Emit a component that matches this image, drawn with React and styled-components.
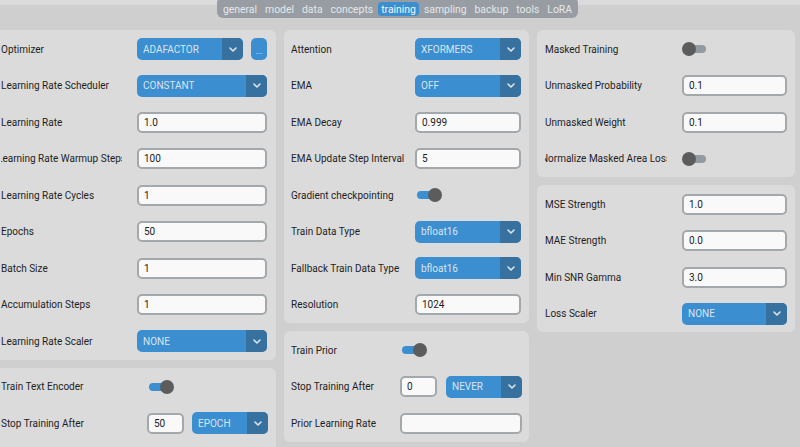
import React from 'react'
import styled, { createGlobalStyle } from 'styled-components'

const GlobalStyle = createGlobalStyle`
	html, body {
		margin: 0;
		padding: 0;
	}
	body {
		background: #cfcfcf;
		font-family: Roboto, "Liberation Sans", sans-serif;
		overflow: hidden;
	}
`

const Window = styled.div`
	width: 800px;
	height: 447px;
	overflow: hidden;
	background: #cfcfcf;
	display: flex;
	flex-direction: column;
`

const Header = styled.div`
	flex: none;
	height: 30px;
	background: linear-gradient(#dbdbdb 0 5px, #cfcfcf 5px);
	display: flex;
	justify-content: center;
	align-items: flex-start;
	padding-right: 5px;
`

const TabBar = styled.div`
	margin-top: -3px;
	height: 21px;
	box-sizing: border-box;
	padding: 5px 3px 2px;
	background: #979da2;
	border-radius: 6px;
	display: flex;
	gap: 2px;
`

const Tab = styled.div`
	height: 14px;
	padding: 0 3px;
	border-radius: 4px;
	display: flex;
	align-items: center;
	font-size: 10.4px;
	color: ${props => (props.active ? '#f2f5f8' : '#e4e8ec')};
	background: ${props => (props.active ? '#3b8ed0' : 'transparent')};
`

const Columns = styled.div`
	display: grid;
	grid-template-columns: 283px 245px 258px;
	column-gap: 8px;
	margin-left: -7px;
	align-items: start;
`

const Column = styled.div`
	display: flex;
	flex-direction: column;
	gap: 8px;
`

const Panel = styled.div`
	background: #dbdbdb;
	border-radius: 6px;
	padding: 1px ${props => props.right}px ${props => props.tail || 0}px ${props => props.left}px;
`

const Row = styled.div`
	height: 36.5px;
	display: grid;
	grid-template-columns: ${props => props.labelWidth}px 1fr;
	column-gap: ${props => props.gap || 15}px;
	align-items: center;
`

const Label = styled.div`
	overflow: hidden;
	white-space: nowrap;
	display: flex;
	justify-content: ${props => (props.center ? 'center' : 'flex-start')};
	font-size: 10px;
	color: #1e1e1e;
`

const Controls = styled.div`
	display: flex;
	align-items: center;
	gap: ${props => props.gap || 8}px;
`

const Entry = styled.input`
	box-sizing: border-box;
	width: ${props => (props.w ? `${props.w}px` : '100%')};
	height: 21px;
	margin: 0;
	padding: 0 5px;
	border: 2px solid #a3a8ac;
	border-radius: 5px;
	background: #f9f9fa;
	font-family: Roboto, "Liberation Sans", sans-serif;
	font-size: 10px;
	color: #1c1c1c;
	outline: none;
`

const SelectBox = styled.div`
	width: ${props => (props.w ? `${props.w}px` : '100%')};
	height: 22px;
	border-radius: 5px;
	overflow: hidden;
	display: flex;
	background: #3b8ed0;
	flex: none;
`

const SelectValue = styled.div`
	flex: 1;
	display: flex;
	align-items: center;
	padding-left: 6px;
	font-size: 10px;
	color: #dce4ee;
	white-space: nowrap;
`

const SelectArrow = styled.div`
	width: 21px;
	display: flex;
	align-items: center;
	justify-content: center;
	background: #36719f;
`

const DotsButton = styled.div`
	width: 16px;
	height: 22px;
	flex: none;
	border-radius: 5px;
	background: #3b8ed0;
	color: #dce4ee;
	font-size: 9px;
	display: flex;
	align-items: center;
	justify-content: center;
	padding-top: 3px;
	box-sizing: border-box;
`

const SwitchWrap = styled.div`
	position: relative;
	width: 27px;
	height: 14px;
	display: flex;
	align-items: center;
`

const Track = styled.div`
	width: 22px;
	height: 8px;
	margin-left: 2px;
	border-radius: 4px;
	background: ${props => (props.on ? '#3b8ed0' : '#939ba2')};
`

const Knob = styled.div`
	position: absolute;
	top: 0;
	left: ${props => (props.on ? 13 : 0)}px;
	width: 14px;
	height: 14px;
	border-radius: 50%;
	background: #5c5c5c;
`

const Chevron = () => (
	<svg width="8" height="5" viewBox="0 0 8 5">
		<polyline points="1,1 4,4 7,1" fill="none" stroke="#dce4ee" strokeWidth="1.6" strokeLinecap="round" strokeLinejoin="round" />
	</svg>
)

const Select = ({ value, w }) => (
	<SelectBox w={w}>
		<SelectValue>{value}</SelectValue>
		<SelectArrow>
			<Chevron />
		</SelectArrow>
	</SelectBox>
)

const Switch = ({ on }) => (
	<SwitchWrap>
		<Track on={on ? 1 : 0} />
		<Knob on={on ? 1 : 0} />
	</SwitchWrap>
)

const tabs = ['general', 'model', 'data', 'concepts', 'training', 'sampling', 'backup', 'tools', 'LoRA']

const Field = ({ label, center, labelWidth, gap, children }) => (
	<Row labelWidth={labelWidth} gap={gap}>
		<Label center={center}>
			<span>{label}</span>
		</Label>
		{children}
	</Row>
)

const App = () => (
	<Window>
		<GlobalStyle />
		<Header>
			<TabBar>
				{tabs.map(t => (
					<Tab key={t} active={t === 'training'}>
						{t}
					</Tab>
				))}
			</TabBar>
		</Header>
		<Columns>
			<Column>
				<Panel left={8} right={9}>
					<Field labelWidth={121} label="Optimizer">
						<Controls>
							<Select value="ADAFACTOR" w={106} />
							<DotsButton>...</DotsButton>
						</Controls>
					</Field>
					<Field labelWidth={121} label="Learning Rate Scheduler">
						<Select value="CONSTANT" />
					</Field>
					<Field labelWidth={121} label="Learning Rate">
						<Entry readOnly value="1.0" />
					</Field>
					<Field labelWidth={121} label="Learning Rate Warmup Steps" center>
						<Entry readOnly value="100" />
					</Field>
					<Field labelWidth={121} label="Learning Rate Cycles">
						<Entry readOnly value="1" />
					</Field>
					<Field labelWidth={121} label="Epochs">
						<Entry readOnly value="50" />
					</Field>
					<Field labelWidth={121} label="Batch Size">
						<Entry readOnly value="1" />
					</Field>
					<Field labelWidth={121} label="Accumulation Steps">
						<Entry readOnly value="1" />
					</Field>
					<Field labelWidth={121} label="Learning Rate Scaler">
						<Select value="NONE" />
					</Field>
				</Panel>
				<Panel left={8} right={8} tail={30}>
					<Field labelWidth={131} label="Train Text Encoder">
						<Switch on />
					</Field>
					<Field labelWidth={131} label="Stop Training After">
						<Controls>
							<Entry readOnly value="50" w={37} />
							<Select value="EPOCH" w={76} />
						</Controls>
					</Field>
				</Panel>
			</Column>
			<Column>
				<Panel left={7} right={8}>
					<Field labelWidth={115} gap={9} label="Attention">
						<Select value="XFORMERS" />
					</Field>
					<Field labelWidth={115} gap={9} label="EMA">
						<Select value="OFF" />
					</Field>
					<Field labelWidth={115} gap={9} label="EMA Decay">
						<Entry readOnly value="0.999" />
					</Field>
					<Field labelWidth={115} gap={9} label="EMA Update Step Interval">
						<Entry readOnly value="5" />
					</Field>
					<Field labelWidth={115} gap={9} label="Gradient checkpointing">
						<Switch on />
					</Field>
					<Field labelWidth={115} gap={9} label="Train Data Type">
						<Select value="bfloat16" />
					</Field>
					<Field labelWidth={115} gap={9} label="Fallback Train Data Type">
						<Select value="bfloat16" />
					</Field>
					<Field labelWidth={115} gap={9} label="Resolution">
						<Entry readOnly value="1024" />
					</Field>
				</Panel>
				<Panel left={7} right={7}>
					<Field labelWidth={94} label="Train Prior">
						<Switch on />
					</Field>
					<Field labelWidth={94} label="Stop Training After">
						<Controls gap={9}>
							<Entry readOnly value="0" w={37} />
							<Select value="NEVER" w={76} />
						</Controls>
					</Field>
					<Field labelWidth={94} label="Prior Learning Rate">
						<Entry readOnly value="" />
					</Field>
				</Panel>
			</Column>
			<Column>
				<Panel left={8} right={8}>
					<Field labelWidth={122} label="Masked Training">
						<Switch />
					</Field>
					<Field labelWidth={122} label="Unmasked Probability">
						<Entry readOnly value="0.1" />
					</Field>
					<Field labelWidth={122} label="Unmasked Weight">
						<Entry readOnly value="0.1" />
					</Field>
					<Field labelWidth={122} label="Normalize Masked Area Loss" center>
						<Switch />
					</Field>
				</Panel>
				<Panel left={8} right={8}>
					<Field labelWidth={122} label="MSE Strength">
						<Entry readOnly value="1.0" />
					</Field>
					<Field labelWidth={122} label="MAE Strength">
						<Entry readOnly value="0.0" />
					</Field>
					<Field labelWidth={122} label="Min SNR Gamma">
						<Entry readOnly value="3.0" />
					</Field>
					<Field labelWidth={122} label="Loss Scaler">
						<Select value="NONE" />
					</Field>
				</Panel>
			</Column>
		</Columns>
	</Window>
)

export default App
